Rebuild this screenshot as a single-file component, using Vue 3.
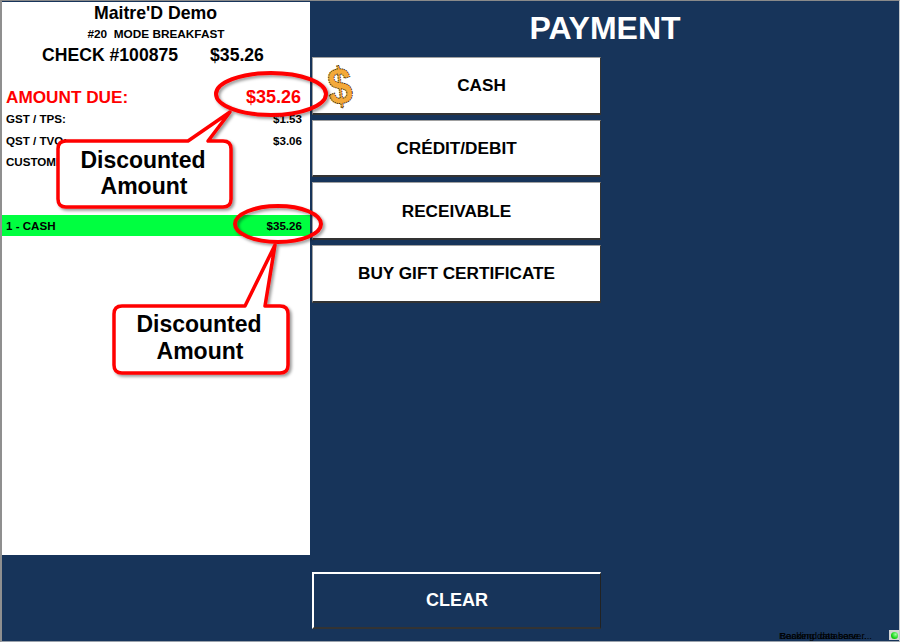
<template>
  <div class="window">
    <aside class="check">
      <h1 class="venue">Maitre'D Demo</h1>
      <div class="mode">#20&nbsp; MODE BREAKFAST</div>
      <div class="check-line">
        <span>CHECK #100875</span>
        <span>$35.26</span>
      </div>
      <div class="due">
        <span>AMOUNT DUE:</span>
        <span>$35.26</span>
      </div>
      <div v-for="row in taxRows" :key="row.label" class="tax">
        <span>{{ row.label }}</span>
        <span>{{ row.value }}</span>
      </div>
      <div class="tender">
        <span>1 - CASH</span>
        <span>$35.26</span>
      </div>
    </aside>

    <main class="pay">
      <h2 class="title">PAYMENT</h2>
      <div class="buttons">
        <button v-for="b in payButtons" :key="b.label" class="pay-btn" :class="{ 'with-icon': b.icon }">
          <svg v-if="b.icon" class="dollar" viewBox="0 0 34 54" width="34" height="54">
            <text x="17" y="44" text-anchor="middle" transform="rotate(-6 17 27) translate(17 0) scale(0.84 1) translate(-17 0)" class="dollar-glyph">$</text>
          </svg>
          {{ b.label }}
        </button>
      </div>
      <button class="clear">CLEAR</button>
    </main>

    <footer class="status">
      <span class="status-text">Reading data server...</span>
      <span class="status-text over">Backend database...</span>
      <span class="led"><i></i></span>
    </footer>

    <!-- annotation layer drawn over the screenshot -->
    <svg class="notes" width="900" height="642" viewBox="0 0 900 642">
      <defs>
        <filter id="soft" x="-20%" y="-20%" width="150%" height="150%">
          <feDropShadow dx="2" dy="2" stdDeviation="1.5" flood-color="#000" flood-opacity="0.4" />
        </filter>
      </defs>
      <g filter="url(#soft)" fill="none" stroke="#f00" stroke-width="4">
        <ellipse cx="271" cy="94" rx="55" ry="21" />
        <ellipse cx="278" cy="224" rx="43" ry="18" />
      </g>
      <path
        class="callout"
        filter="url(#soft)"
        d="M66 141 H188 L230 112 L208 141 H223 Q231 141 231 149 V199 Q231 207 223 207 H66 Q58 207 58 199 V149 Q58 141 66 141 Z"
      />
      <path
        class="callout"
        filter="url(#soft)"
        d="M122 306 H245 L275 245 L265 306 H280 Q288 306 288 314 V365 Q288 373 280 373 H122 Q114 373 114 365 V314 Q114 306 122 306 Z"
      />
      <text class="note-text" x="143" y="168">Discounted</text>
      <text class="note-text" x="144" y="194">Amount</text>
      <text class="note-text" x="199" y="332">Discounted</text>
      <text class="note-text" x="200" y="359">Amount</text>
    </svg>
  </div>
</template>

<script setup>
const taxRows = [
  { label: 'GST / TPS:', value: '$1.53' },
  { label: 'QST / TVQ:', value: '$3.06' },
  { label: 'CUSTOMER', value: '' },
]

const payButtons = [
  { label: 'CASH', icon: true },
  { label: 'CRÉDIT/DEBIT' },
  { label: 'RECEIVABLE' },
  { label: 'BUY GIFT CERTIFICATE' },
]
</script>

<style>
html, body { margin: 0; background: #17345a; }
</style>

<style scoped>
.window {
  position: relative;
  width: 900px;
  height: 642px;
  box-sizing: border-box;
  padding: 1px 1px 1px 0;
  background: #17345a;
  border-top: 1px solid #8a8a8a;
  border-left: 2px solid #8f8f8f;
  border-right: 1px solid #c4c8cc;
  border-bottom: 1px solid #9aa2ac;
  display: grid;
  grid-template-columns: 308px 1fr;
  grid-template-rows: 553px 1fr;
  font-family: "Liberation Sans", Arial, sans-serif;
  overflow: hidden;
}

.check {
  grid-column: 1;
  grid-row: 1;
  background: #fff;
  color: #000;
  display: flex;
  flex-direction: column;
  align-items: stretch;
}
.venue {
  margin: 2px 0 0;
  text-align: center;
  font-size: 17.7px;
  line-height: 19px;
  font-weight: 700;
  padding-right: 1px;
}
.mode {
  margin-top: 4px;
  text-align: center;
  font-size: 11.8px;
  line-height: 14px;
  font-weight: 700;
}
.check-line {
  margin-top: 4px;
  display: flex;
  justify-content: center;
  gap: 32px;
  font-size: 17.6px;
  line-height: 20px;
  font-weight: 700;
  padding-right: 6px;
}
.due {
  margin: 22px 0 1px;
  height: 20px;
  padding: 0 9px 0 4px;
  display: flex;
  justify-content: space-between;
  align-items: center;
  color: #f00;
  font-size: 17.2px;
  font-weight: 700;
}
.due span:last-child { font-size: 18px; }
.tax {
  height: 21.5px;
  padding: 0 8px 0 4px;
  display: flex;
  justify-content: space-between;
  align-items: center;
  font-size: 11.6px;
  font-weight: 700;
}
.tender {
  margin-top: 42px;
  height: 21px;
  padding: 0 8px 0 4px;
  background: #00ff40;
  display: flex;
  justify-content: space-between;
  align-items: center;
  font-size: 11.6px;
  font-weight: 700;
}

.pay {
  grid-column: 2;
  grid-row: 1 / 3;
  position: relative;
  display: flex;
  flex-direction: column;
  padding-left: 2px;
}
.title {
  margin: 0;
  height: 53px;
  padding-bottom: 2px;
  width: 586px;
  display: flex;
  align-items: center;
  justify-content: center;
  color: #fff;
  font-size: 32px;
  font-weight: 700;
}
.buttons {
  display: flex;
  flex-direction: column;
  gap: 5px;
  width: 289px;
}
.pay-btn {
  position: relative;
  height: 57.67px;
  padding: 1px 0 0;
  background: #fff;
  border: 1px solid #a0a0a0;
  border-right-color: #333;
  border-bottom: 2px solid #333;
  box-sizing: border-box;
  font: 700 17.2px "Liberation Sans", Arial, sans-serif;
  color: #000;
}
.pay-btn.with-icon { padding-left: 50px; }
.dollar {
  position: absolute;
  left: 10px;
  top: 2px;
  overflow: visible;
}
.dollar-glyph {
  font: 700 52px "Liberation Sans", sans-serif;
  fill: #f4a93a;
  stroke: #3a2800;
  stroke-width: 1;
  stroke-dasharray: 1.5 1;
}
.clear {
  margin-top: 269.3px;
  width: 289px;
  height: 57px;
  box-sizing: border-box;
  background: #17345a;
  border: 1px solid #fff;
  border-left-width: 2px;
  border-top-width: 2px;
  border-right-color: #222;
  border-bottom: 2px solid #333;
  color: #fff;
  font: 700 18px "Liberation Sans", Arial, sans-serif;
}

.status {
  position: absolute;
  right: 0;
  bottom: 0;
  width: 120px;
  height: 11px;
}
.status-text {
  position: absolute;
  left: 0;
  top: 0;
  font-size: 9.5px;
  line-height: 11px;
  color: #000;
  white-space: nowrap;
}
.status-text.over { left: 1px; }
.led {
  position: absolute;
  right: 0;
  top: 0;
  width: 10px;
  height: 10px;
  background: #d4d4d4;
  display: flex;
  align-items: center;
  justify-content: center;
}
.led i {
  width: 7px;
  height: 7px;
  border-radius: 50%;
  background: radial-gradient(circle at 65% 35%, #9dff9d, #14d414 60%, #0a8a0a);
}

.notes {
  position: absolute;
  left: -2px;
  top: -1px;
  pointer-events: none;
}
.callout {
  fill: #fff;
  stroke: #f00;
  stroke-width: 3.5;
  stroke-linejoin: round;
}
.note-text {
  font: 700 23px "Liberation Sans", Arial, sans-serif;
  fill: #000;
  text-anchor: middle;
}
</style>
